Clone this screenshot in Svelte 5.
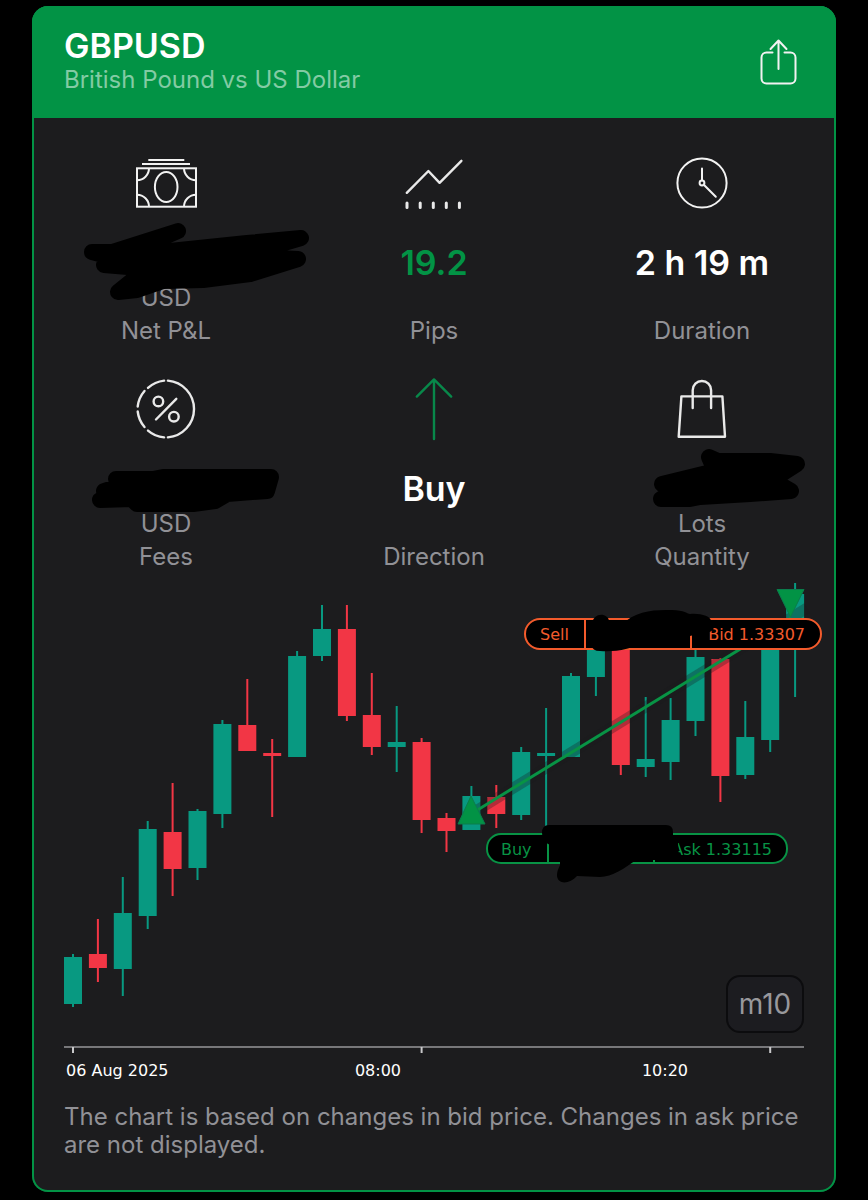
<script lang="ts">
  type Metric = {
    icon: string;
    label: string;
    value?: string;
    unit?: string;
    tone?: string;
    redaction?: string;
  };

  const metrics: Metric[] = [
    {
      icon: "cash",
      label: "Net P&L",
      unit: "USD",
      redaction:
        "M146 -10L80 11L60 11L82 17L72 24L96 26L112 30L86 51L105 49L131 40L171 39L218 33L266 18L208 15L269 -3L215 2L138 10L98 11Z",
    },
    { icon: "trend", label: "Pips", value: "19.2", tone: "gain" },
    { icon: "clock", label: "Duration", value: "2 h 19 m" },
    {
      icon: "percent",
      label: "Fees",
      unit: "USD",
      redaction:
        "M84 12L121 12L131 10L239 10L235 24L195 27L183 34L161 37L105 37L100 32L68 33L82 27L72 24L90 18Z",
    },
    { icon: "up", label: "Direction", value: "Buy" },
    {
      icon: "bag",
      label: "Quantity",
      unit: "Lots",
      redaction:
        "M141 -10L150 -6L202 -6L229 -3L204 13L223 24L182 27L132 30L122 32L93 32L104 25L94 17L139 6L147 4Z",
    },
  ];

  // direction, high, body top, body bottom, low
  const candles: [string, number, number, number, number][] = [
    ["up", 381, 384, 431, 434],
    ["down", 346, 381, 395, 409],
    ["up", 304, 340, 396, 423],
    ["up", 248, 256, 343, 356],
    ["down", 210, 259, 296, 323],
    ["up", 236, 238, 295, 307],
    ["up", 147, 151, 241, 255],
    ["down", 106, 152, 178, 178],
    ["down", 166, 180, 183, 244],
    ["up", 78, 83, 184, 184],
    ["up", 32, 56, 83, 88],
    ["down", 32, 56, 143, 148],
    ["down", 100, 142, 174, 182],
    ["up", 133, 169, 174, 199],
    ["down", 165, 169, 247, 260],
    ["down", 240, 245, 258, 279],
    ["up", 213, 223, 257, 257],
    ["down", 212, 224, 241, 255],
    ["up", 174, 179, 242, 247],
    ["up", 135, 180, 183, 258],
    ["up", 100, 103, 184, 184],
    ["up", 50, 60, 104, 123],
    ["down", 50, 55, 192, 202],
    ["up", 124, 186, 194, 204],
    ["up", 125, 147, 189, 207],
    ["up", 60, 84, 148, 163],
    ["down", 85, 86, 203, 229],
    ["up", 128, 164, 202, 206],
    ["up", 45, 50, 167, 179],
    ["up", 10, 21, 70, 124],
  ];

  const step = 24.9;
  const candleX = (i: number) => 41 + i * step;

  const ticks = [0, 14, 28].map(candleX);
</script>

<main class="card">
  <header class="header">
    <div class="heading">
      <h1>GBPUSD</h1>
      <p class="subtitle">British Pound vs US Dollar</p>
    </div>
    <button class="share" type="button" aria-label="Share">
      <svg width="40" height="48" viewBox="0 0 40 48">
        <path d="M14.5 14.500H8.500a5 5 0 0 0-5 5v21a5 5 0 0 0 5 5h24a5 5 0 0 0 5-5v-21a5 5 0 0 0-5-5h-6" />
        <path d="M20.500 31V3M12.500 11l8-8.500 8 8.500" />
      </svg>
    </button>
  </header>

  <section class="metrics">
    {#each metrics as metric}
      <div class="metric">
        <svg class="icon {metric.icon}" width="64" height="64" viewBox="0 0 64 64" aria-hidden="true">
          {#if metric.icon === "cash"}
            <path d="M14.3 9h36M8 13h48" />
            <rect x="3" y="17.3" width="59" height="38.4" />
            <ellipse cx="32.2" cy="36" rx="11.3" ry="15" />
            <path d="M15 17.3a12 12 0 0 1-12 12M50 17.3a12 12 0 0 0 12 12M15 55.7a12 12 0 0 0-12-12M50 55.7a12 12 0 0 1 12-12" />
          {:else if metric.icon === "trend"}
            <path d="M4.8 41.8L26.4 20L37.6 31.8L59.4 9.8" />
            <path class="ticks" d="M5 52v4.500M18.2 52v4.500M31.3 52v4.500M44.3 52v4.500M57.4 52v4.500" />
          {:else if metric.icon === "clock"}
            <circle cx="32" cy="32" r="24.6" />
            <circle cx="32" cy="32" r="2.4" />
            <path d="M32 29.4V17.500M33.8 33.8L45.8 45.8" />
          {:else if metric.icon === "percent"}
            <path d="M33.9 3.6A28.500 28.500 0 0 1 33.9 60.4M30.1 3.6A28.500 28.500 0 0 0 14 10.9M10.5 14A28.500 28.500 0 0 0 3.7 29.5M3.7 34.500A28.500 28.500 0 0 0 10.5 50M14 53.6A28.500 28.500 0 0 0 30.1 60.4" />
            <circle cx="24.4" cy="24.4" r="4.8" />
            <circle cx="39.9" cy="39.7" r="4.8" />
            <path d="M42.3 21.8L22 42.500" />
          {:else if metric.icon === "up"}
            <path d="M32 2.4V62M14.8 19.6L32 2.4L49.2 19.6" />
          {:else}
            <path d="M11.4 19.4H52.4L55 59.7H8.7Z" />
            <path d="M22.7 31V13.2a9.2 9.2 0 0 1 18.4 0V31" />
          {/if}
        </svg>
        <div class="value {metric.tone ?? ''}">
          {#if metric.redaction}
            <svg class="redaction" width="268" height="40" viewBox="0 0 268 40" aria-label="Hidden value" role="img">
              <path d={metric.redaction} />
            </svg>
          {:else}
            {metric.value}
          {/if}
        </div>
        <div class="caption">{metric.unit ?? ""}</div>
        <div class="caption">{metric.label}</div>
      </div>
    {/each}
  </section>

  <section class="chart">
    <svg class="plot" viewBox="0 0 804 512" role="img" aria-label="GBPUSD price chart">
      {#each candles as [direction, high, top, bottom, low], i}
        <g class={direction}>
          <rect x={candleX(i) - 1} y={high} width="2" height={low - high} />
          <rect x={candleX(i) - 9} y={top} width="18" height={bottom - top} />
        </g>
      {/each}

      <path class="trade-shadow" d="M439 241L775 35" />
      <path class="trade-line" d="M439 241L759 45" />
      <path class="marker" d="M439 223L453 251H426Z" />
      <path class="marker" d="M745 16.500H772L758.500 44Z" />

      <g class="pill sell">
        <rect x="493" y="46" width="296" height="30" rx="15" />
        <path d="M553 46V76M659 46V76" />
        <text x="508" y="67">Sell</text>
        <text x="773" y="67" text-anchor="end">Bid 1.33307</text>
      </g>
      <path d="M560 72V52C560 39 576 39 577 48H594C608 37 623 37 640 37C652 37 656 41 658 41C668 40 679 43 679 48L682 53C682 59 676 60 670 60L658 63L618 67C598 77 583 79 568 78Q560 78 560 72Z" />

      <g class="pill buy">
        <rect x="455" y="261" width="300" height="29" rx="14" />
        <path d="M516 261V290M622 261V290" />
        <text x="469" y="282">Buy</text>
        <text x="740" y="282" text-anchor="end">Ask 1.33115</text>
      </g>
      <path d="M510 260Q510 252 517 252H634Q641 252 641 259V264L646 270L647 284L640 287H604C593 295 580 304 568 304L545 303C538 311 526 312 525 303C525 297 527 295 528 292V285L518 272Q510 269 510 260Z" />

      <path class="axis" d="M32 474H772" />
      {#each ticks as x}
        <path class="tick" d="M{x} 474V480" />
      {/each}
      <g class="dates">
        <text x="34" y="503">06 Aug 2025</text>
        <text x="346" y="503" text-anchor="middle">08:00</text>
        <text x="633" y="503" text-anchor="middle">10:20</text>
      </g>
    </svg>
    <button class="timeframe" type="button">m10</button>
  </section>

  <p class="note">
    The chart is based on changes in bid price. Changes in ask price are not displayed.
  </p>
</main>

<style>
  :global(body) {
    background: #000;
  }

  .card {
    --green: #029345;
    --muted: #919196;
    margin: 6px 32px 8px;
    overflow: hidden;
    border-radius: 16px;
    background: #1c1c1e;
    box-shadow: inset 0 0 0 2px var(--green);
    color: #fff;
    font-family: Inter, "Liberation Sans", sans-serif;
  }

  h1,
  p {
    margin: 0;
  }

  .header {
    display: flex;
    justify-content: space-between;
    align-items: center;
    box-sizing: border-box;
    min-height: 112px;
    padding: 0 38px 0 32px;
    background: var(--green);
  }

  .heading {
    padding-bottom: 5px;
  }

  h1 {
    font-size: 34px;
    font-weight: 600;
    line-height: 40px;
  }

  .subtitle {
    color: #83cba4;
    font-size: 24px;
    line-height: 28px;
  }

  .share {
    display: flex;
    padding: 0;
    border: 0;
    background: none;
  }

  .share svg,
  .icon {
    fill: none;
    stroke: #f2f2f2;
    stroke-width: 2;
    stroke-linecap: round;
    stroke-linejoin: round;
  }

  .cash {
    stroke-linecap: butt;
    stroke-linejoin: miter;
  }

  .trend,
  .percent,
  .bag,
  .up.icon {
    stroke: #e9e9e9;
    stroke-width: 2.4;
  }

  .up.icon {
    stroke: #08884a;
  }

  .ticks {
    stroke-width: 3;
  }

  .metrics {
    display: grid;
    grid-template-columns: repeat(3, 1fr);
    row-gap: 30px;
    padding-top: 33px;
  }

  .metric {
    display: flex;
    flex-direction: column;
    align-items: center;
  }

  .value {
    display: flex;
    margin-top: 26px;
    height: 40px;
    font-size: 34px;
    font-weight: 600;
    line-height: 44px;
  }

  .gain {
    color: var(--green);
  }

  .redaction {
    position: relative;
    overflow: visible;
    stroke: #000;
    stroke-width: 16;
    stroke-linejoin: round;
  }

  .caption {
    min-height: 33px;
    color: var(--muted);
    font-size: 24px;
    line-height: 33px;
  }

  .chart {
    position: relative;
  }

  .plot {
    display: block;
    width: 100%;
    font-family: "DejaVu Sans", Verdana, sans-serif;
    font-size: 16px;
  }

  g.up {
    fill: #089981;
  }

  g.down {
    fill: #f23645;
  }

  .trade-shadow {
    stroke: #1c1c1e;
    stroke-opacity: 0.3;
    stroke-width: 11;
  }

  .trade-line {
    stroke: #089345;
    stroke-width: 3;
  }

  .marker {
    fill: #029345;
    stroke: #0a7d4c;
    stroke-width: 1;
  }

  .pill rect,
  .pill path {
    stroke-width: 2;
  }

  .sell rect,
  .sell path {
    stroke: #f35b2c;
  }

  .sell text {
    fill: #f35b2c;
  }

  .buy rect,
  .buy path {
    stroke: #089345;
  }

  .buy text {
    fill: #089345;
  }

  .axis {
    stroke: #77777a;
    stroke-width: 2;
  }

  .tick {
    stroke: #c8c8ca;
    stroke-width: 2;
  }

  .dates {
    fill: #fff;
  }

  .timeframe {
    position: absolute;
    right: 32px;
    bottom: 52px;
    box-sizing: border-box;
    width: 78px;
    height: 58px;
    padding: 0;
    border: 2px solid #0c0c0e;
    border-radius: 14px;
    background: #1c1c20;
    color: #98989c;
    font-family: inherit;
    font-size: 28px;
  }

  .note {
    padding: 18px 32px 33px;
    color: var(--muted);
    font-size: 24px;
    line-height: 28px;
  }
</style>
